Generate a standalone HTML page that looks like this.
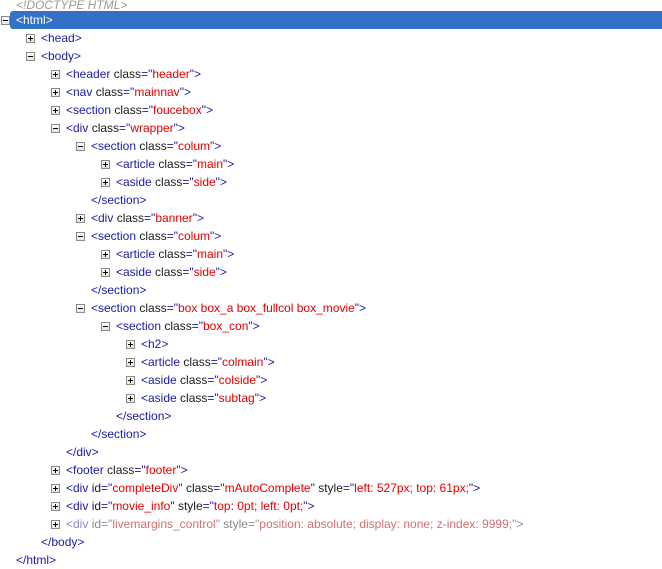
<!DOCTYPE html>
<html><head><style>
body{margin:0;width:662px;height:566px;background:#fff;font-family:"Liberation Sans",sans-serif;font-size:12px;position:relative;overflow:hidden}
.r{position:absolute;left:0;width:662px;height:18px;line-height:18px;white-space:nowrap;color:#1a1aa6}
.b{position:absolute;width:7px;height:7px;border:1px solid #8a8a8a;background:linear-gradient(#fff,#e4e4e4);top:5px}
.b:before{content:"";position:absolute;left:1px;top:3px;width:5px;height:1px;background:#000}
.p:after{content:"";position:absolute;left:3px;top:1px;width:1px;height:5px;background:#000}
.t{position:absolute;top:0}
.v{color:#e00000}
.k{color:#1a1a1a}
.g{color:#8a8aba}.g .v{color:#d07070}.g .k{color:#888}
.sel{position:absolute;left:10px;top:11px;width:652px;height:18px;background:#3370c8;border-radius:3px 0 0 3px}
</style></head><body>
<div class="r" style="top:-4px;left:16px;color:#999;font-style:italic">&lt;!DOCTYPE HTML&gt;</div>
<div class="sel"></div>
<div id="rows"></div>
<script>
function K(s){return '<span class=k>'+s+'</span>';}
function V(s){return '<span class=v>'+s+'</span>';}
function A(n,v){return ' '+K(n)+'="'+V(v)+'"';}
var rows=[
[0,'m','<span style="color:#fff">&lt;html&gt;</span>'],
[1,'p','&lt;head&gt;'],
[1,'m','&lt;body&gt;'],
[2,'p','&lt;header'+A('class','header')+'&gt;'],
[2,'p','&lt;nav'+A('class','mainnav')+'&gt;'],
[2,'p','&lt;section'+A('class','foucebox')+'&gt;'],
[2,'m','&lt;div'+A('class','wrapper')+'&gt;'],
[3,'m','&lt;section'+A('class','colum')+'&gt;'],
[4,'p','&lt;article'+A('class','main')+'&gt;'],
[4,'p','&lt;aside'+A('class','side')+'&gt;'],
[3,'','&lt;/section&gt;'],
[3,'p','&lt;div'+A('class','banner')+'&gt;'],
[3,'m','&lt;section'+A('class','colum')+'&gt;'],
[4,'p','&lt;article'+A('class','main')+'&gt;'],
[4,'p','&lt;aside'+A('class','side')+'&gt;'],
[3,'','&lt;/section&gt;'],
[3,'m','&lt;section'+A('class','box box_a box_fullcol box_movie')+'&gt;'],
[4,'m','&lt;section'+A('class','box_con')+'&gt;'],
[5,'p','&lt;h2&gt;'],
[5,'p','&lt;article'+A('class','colmain')+'&gt;'],
[5,'p','&lt;aside'+A('class','colside')+'&gt;'],
[5,'p','&lt;aside'+A('class','subtag')+'&gt;'],
[4,'','&lt;/section&gt;'],
[3,'','&lt;/section&gt;'],
[2,'','&lt;/div&gt;'],
[2,'p','&lt;footer'+A('class','footer')+'&gt;'],
[2,'p','&lt;div'+A('id','completeDiv')+A('class','mAutoComplete')+A('style','left: 527px; top: 61px;')+'&gt;'],
[2,'p','&lt;div'+A('id','movie_info')+A('style','top: 0pt; left: 0pt;')+'&gt;'],
[2,'pg','&lt;div'+A('id','livemargins_control')+A('style','position: absolute; display: none; z-index: 9999;')+'&gt;'],
[1,'','&lt;/body&gt;'],
[0,'','&lt;/html&gt;']];
var h='';
rows.forEach(function(r,i){
 var top=11+18*i, bx=1+25*r[0], tx=bx+15;
 var g=r[1].indexOf('g')>=0;
 h+='<div class="r'+(g?' g':'')+'" style="top:'+top+'px">';
 if(r[1][0]=='p'||r[1][0]=='m') h+='<div class="b'+(r[1][0]=='p'?' p':'')+'" style="left:'+bx+'px"></div>';
 h+='<span class="t" style="left:'+tx+'px">'+r[2]+'</span></div>';
});
document.getElementById('rows').innerHTML=h;
</script>
</body></html>
